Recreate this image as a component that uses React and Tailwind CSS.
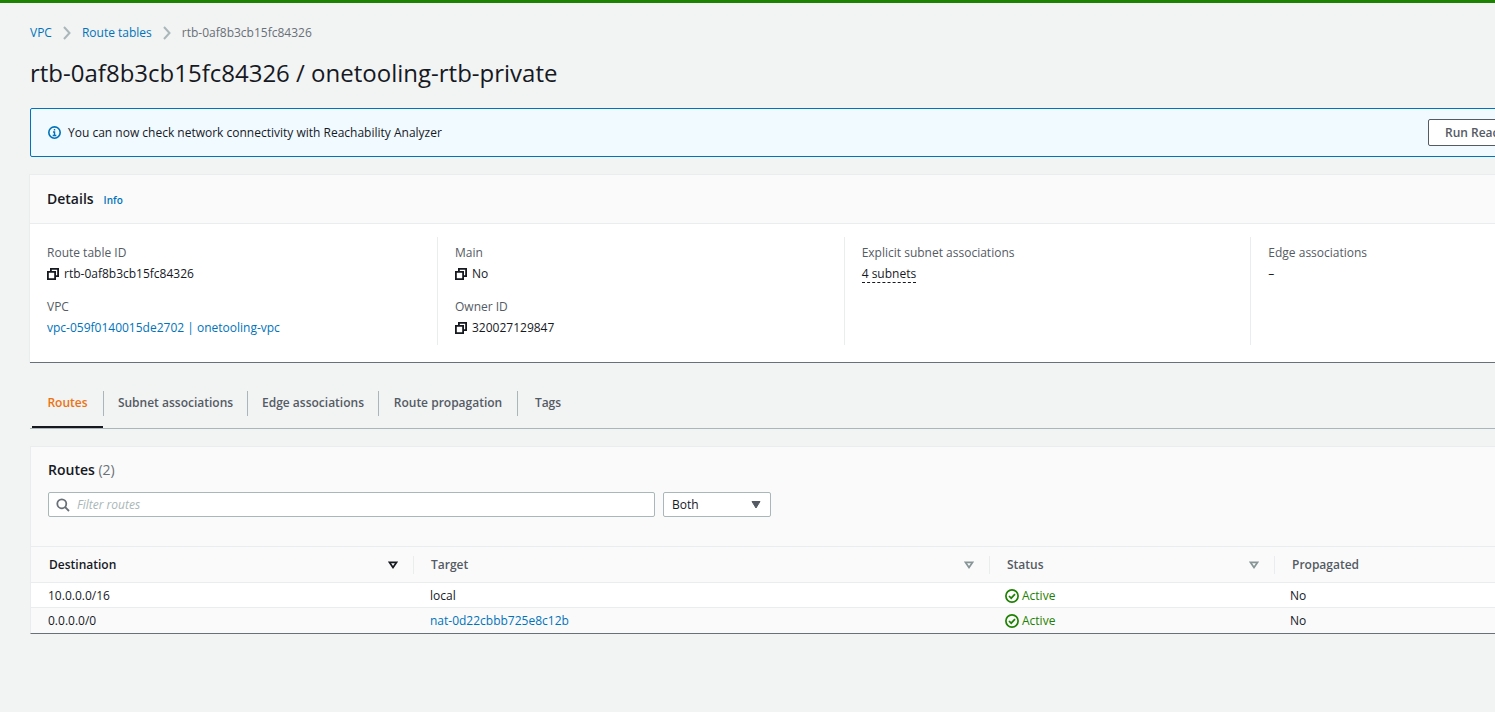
import { Fragment } from "react";

const LINK = "text-[#0073bb] hover:underline";

function Chevron() {
  return (
    <svg className="h-4 w-4 shrink-0" viewBox="0 0 16 16" fill="none" stroke="#aab7b8" strokeWidth="2" aria-hidden="true">
      <path d="M5 2l5.500 6L5 14" />
    </svg>
  );
}

function CopyIcon() {
  return (
    <svg className="h-3 w-3" viewBox="0 0 12 12" fill="none" stroke="#16191f" strokeWidth="1.800" aria-hidden="true">
      <path d="M.9 3.900h7.200v7.200H.9z" />
      <path d="M3.900 3.900v-3h7.200v7.200h-3" />
    </svg>
  );
}

function InfoIcon() {
  return (
    <svg className="h-[13px] w-[13px] shrink-0" viewBox="0 0 12 12" fill="none" stroke="#0073bb" strokeWidth="1.500" aria-hidden="true">
      <circle cx="6" cy="6" r="5.250" />
      <path d="M6 2.700v1.400M4.600 5.500H6v3.200M4.300 8.700h3.400" strokeWidth="1.300" />
    </svg>
  );
}

function SearchIcon() {
  return (
    <svg className="h-[14px] w-[14px] shrink-0" viewBox="0 0 14 14" fill="none" stroke="#687078" strokeWidth="1.800" aria-hidden="true">
      <circle cx="5.800" cy="5.800" r="4.500" />
      <path d="M9 9l4 4" />
    </svg>
  );
}

function SuccessIcon() {
  return (
    <svg className="h-[14px] w-[14px] shrink-0" viewBox="0 0 14 14" fill="none" stroke="#1d8102" strokeWidth="1.700" aria-hidden="true">
      <circle cx="7" cy="7" r="6.100" />
      <path d="M4 7l2.200 2.200L10 5.200" />
    </svg>
  );
}

function SortIcon({ active }) {
  return (
    <svg className="h-2 w-[10px]" viewBox="0 0 10 8" fill="none" stroke={active ? "#16191f" : "#879596"} strokeWidth="1.800" aria-hidden="true">
      <path d="M1.500 1.400h7L5 6.400z" />
    </svg>
  );
}

function Field({ label, children }) {
  return (
    <div>
      <dt className="leading-[21px] text-[#545b64]">{label}</dt>
      <dd className="flex h-[21px] items-center gap-[5px] leading-[21px]">{children}</dd>
    </div>
  );
}

function Copyable({ name, value }) {
  return (
    <>
      <button type="button" aria-label={`Copy ${name}`}>
        <CopyIcon />
      </button>
      <span>{value}</span>
    </>
  );
}

const tabs = [
  { name: "Routes", width: "w-[71px]" },
  { name: "Subnet associations", width: "w-[143px]" },
  { name: "Edge associations", width: "w-[130px]" },
  { name: "Route propagation", width: "w-[138px]" },
  { name: "Tags", width: "w-[60px]" },
];

const columns = ["Destination", "Target", "Status", "Propagated"];

const routes = [
  { destination: "10.0.0.0/16", target: "local", link: false },
  { destination: "0.0.0.0/0", target: "nat-0d22cbbb725e8c12b", link: true },
];

export default function App() {
  return (
    <div className="min-h-screen overflow-x-clip border-t-[3px] border-[#1d8102] bg-[#f2f3f3] font-['Open_Sans',sans-serif] text-xs text-[#16191f]">
      <main className="ml-[30px] mr-[-163px]">
        <nav aria-label="Breadcrumb" className="flex items-center gap-[7px] pt-5 leading-5">
          <a href="#vpc" className={LINK}>VPC</a>
          <Chevron />
          <a href="#route-tables" className={LINK}>Route tables</a>
          <Chevron />
          <span className="text-[#687078]">rtb-0af8b3cb15fc84326</span>
        </nav>

        <h1 className="mt-[15px] text-2xl leading-[30px]">rtb-0af8b3cb15fc84326 / onetooling-rtb-private</h1>

        <div className="mt-5 flex items-center rounded-xs border border-[#0073bb] bg-[#f1faff] py-[10px] pl-[17px] pr-[43px]">
          <InfoIcon />
          <p className="ml-[7px]">You can now check network connectivity with Reachability Analyzer</p>
          <button type="button" className="ml-auto w-[186px] whitespace-nowrap rounded-xs border border-[#545b64] bg-white px-4 text-left font-semibold leading-[25px] text-[#545b64]">
            Run Reachability Analyzer
          </button>
        </div>

        <section className="mt-[17px] border-b border-t border-[#eaeded] border-b-[#687078] bg-white shadow-[-1px_0_0_#eaeded]">
          <header className="flex items-baseline gap-[10px] border-b border-[#eaeded] bg-[#fafafa] px-[17px] py-3">
            <h2 className="text-sm font-semibold leading-6">Details</h2>
            <a href="#info" className="text-[10px] font-semibold text-[#0073bb]">Info</a>
          </header>
          <div className="grid grid-cols-[408px_1fr_1fr_1fr] divide-x divide-[#eaeded] pb-[17px] pt-[13px]">
            <dl className="flex flex-col gap-3 px-[17px] pb-[7px] pt-[5px]">
              <Field label="Route table ID">
                <Copyable name="route table ID" value="rtb-0af8b3cb15fc84326" />
              </Field>
              <Field label="VPC">
                <a href="#vpc-detail" className={LINK}>vpc-059f0140015de2702 | onetooling-vpc</a>
              </Field>
            </dl>
            <dl className="flex flex-col gap-3 px-[17px] pb-[7px] pt-[5px]">
              <Field label="Main">
                <Copyable name="main" value="No" />
              </Field>
              <Field label="Owner ID">
                <Copyable name="owner ID" value="320027129847" />
              </Field>
            </dl>
            <dl className="px-[17px] pt-[5px]">
              <Field label="Explicit subnet associations">
                <button type="button" className="border-b border-dashed border-[#16191f] leading-[17px]">4 subnets</button>
              </Field>
            </dl>
            <dl className="px-[17px] pt-[5px]">
              <Field label="Edge associations">–</Field>
            </dl>
          </div>
        </section>

        <div role="tablist" className="mt-6 flex items-start border-b border-[#aab7b8] pl-[2px]">
          {tabs.map((tab, i) => (
            <Fragment key={tab.name}>
              {i > 0 && <span className="mt-1 h-[25px] w-px bg-[#aab7b8]" />}
              <button
                type="button"
                role="tab"
                aria-selected={i === 0}
                className={`${tab.width} whitespace-nowrap border-b-2 pb-[14px] pt-[7px] font-semibold leading-[18px] ${
                  i === 0 ? "border-[#16191f] text-[#ec7211]" : "border-transparent text-[#545b64]"
                }`}
              >
                {tab.name}
              </button>
            </Fragment>
          ))}
        </div>

        <section className="mt-[17px] border border-[#eaeded] border-b-[#687078] bg-[#fafafa]">
          <div className="px-[17px] pb-[29px] pt-3">
            <h2 className="text-sm font-semibold leading-[22px]">
              Routes <span className="font-normal text-[#687078]">(2)</span>
            </h2>
            <div className="mt-[11px] flex gap-2">
              <label className="flex h-[25px] w-[607px] items-center gap-[7px] rounded-xs border border-[#aab7b8] bg-white px-[7px]">
                <SearchIcon />
                <input
                  type="search"
                  aria-label="Filter routes"
                  placeholder="Filter routes"
                  className="w-full bg-transparent outline-none placeholder:italic placeholder:text-[#aab7b8]"
                />
              </label>
              <div className="relative">
                <select aria-label="Route type" className="h-[25px] w-[108px] appearance-none rounded-xs border border-[#aab7b8] bg-white px-2">
                  <option>Both</option>
                </select>
                <svg className="pointer-events-none absolute right-[10px] top-[9px] h-2 w-[10px]" viewBox="0 0 10 8" fill="#545b64" aria-hidden="true">
                  <path d="M1 .5h8L5 7z" stroke="#545b64" />
                </svg>
              </div>
            </div>
          </div>
          <table className="w-full table-fixed border-collapse text-left">
            <colgroup>
              <col className="w-[383px]" />
              <col className="w-[576px]" />
              <col className="w-[285px]" />
              <col />
            </colgroup>
            <thead>
              <tr className="h-9 border-y border-[#eaeded]">
                {columns.map((name, i) => (
                  <th key={name} scope="col" className="p-0 font-semibold">
                    <div className={`flex h-[18px] items-center justify-between border-[#eaeded] pr-[15px] ${i === 0 ? "pl-[18px]" : "pl-[17px]"} ${i < 3 ? "border-r" : ""}`}>
                      <span className={i === 0 ? "text-[#16191f]" : "text-[#545b64]"}>{name}</span>
                      <button type="button" aria-label={`Sort by ${name}`}>
                        <SortIcon active={i === 0} />
                      </button>
                    </div>
                  </th>
                ))}
              </tr>
            </thead>
            <tbody>
              {routes.map((route) => (
                <tr key={route.destination} className="h-[25px] border-b border-[#eaeded] odd:bg-white last:border-b-0">
                  <td className="pb-0 pl-[17px] pt-[2px]">{route.destination}</td>
                  <td className="pb-0 pl-4 pt-[2px]">
                    {route.link ? <a href="#nat" className={LINK}>{route.target}</a> : route.target}
                  </td>
                  <td className="pb-0 pl-[15px] pt-[2px]">
                    <span className="flex items-center gap-[3px] text-[#1d8102]">
                      <SuccessIcon />
                      Active
                    </span>
                  </td>
                  <td className="pb-0 pl-[15px] pt-[2px]">No</td>
                </tr>
              ))}
            </tbody>
          </table>
        </section>
      </main>
    </div>
  );
}
